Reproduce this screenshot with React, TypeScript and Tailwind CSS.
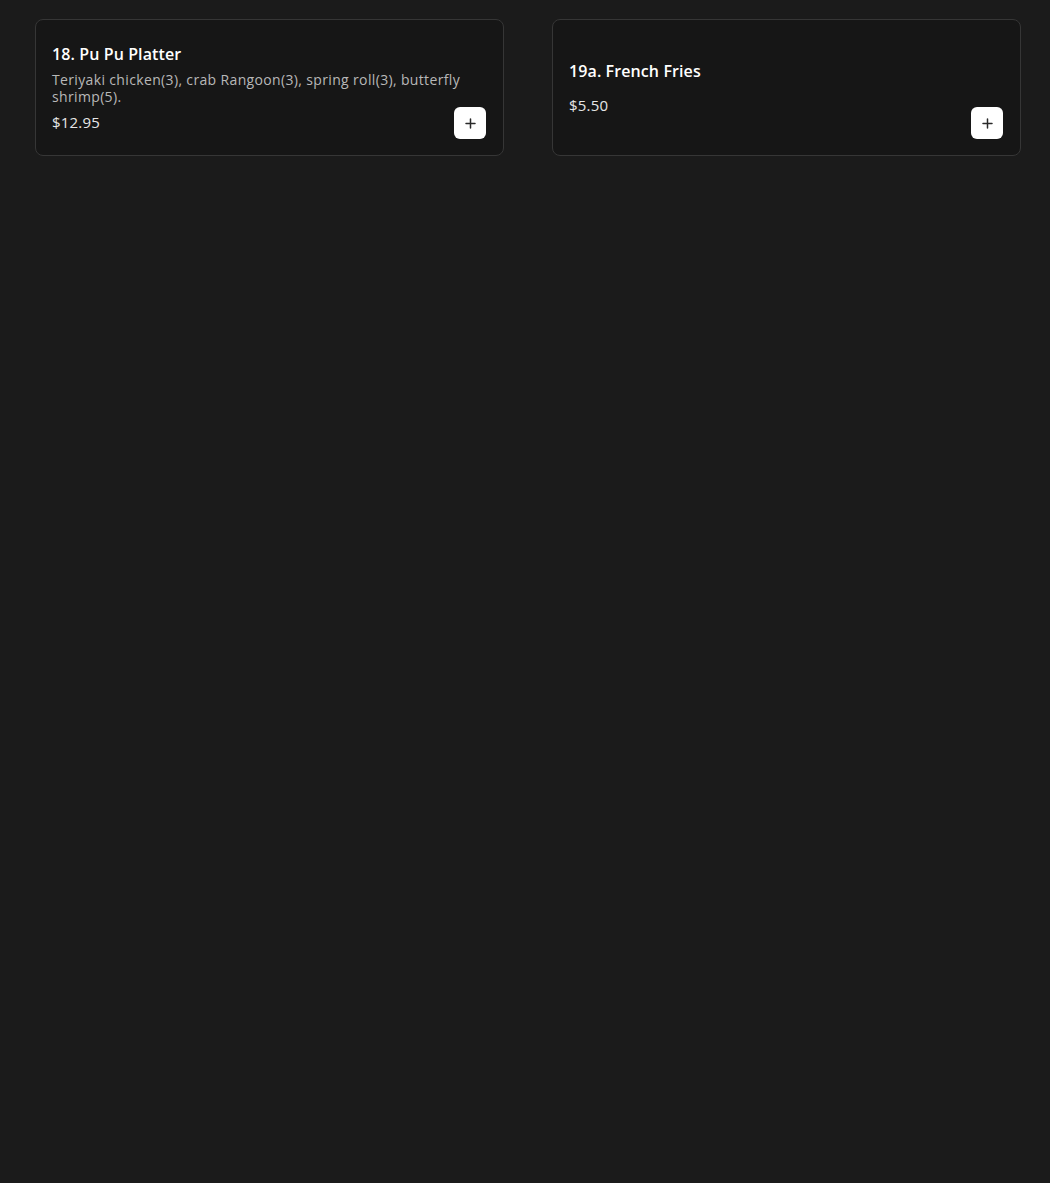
import React from "react";

type Item = { title: string; desc?: string; price: string };

const items: Item[] = [
  {
    title: "18. Pu Pu Platter",
    desc: "Teriyaki chicken(3), crab Rangoon(3), spring roll(3), butterfly shrimp(5).",
    price: "$12.95",
  },
  { title: "19a. French Fries", price: "$5.50" },
];

function Plus() {
  return (
    <svg width="11" height="11" viewBox="0 0 11 11" fill="none">
      <path d="M5.5 1v9M1 5.5h9" stroke="#2a2a2a" strokeWidth="1.5" strokeLinecap="round" />
    </svg>
  );
}

function Card({ item }: { item: Item }) {
  return (
    <div className="relative flex min-h-[137px] flex-col justify-center rounded-lg border border-[#363636] bg-[#161616] px-4 py-4">
      <div className="text-[16px] font-semibold leading-6 tracking-[0.1px] text-white">{item.title}</div>
      {item.desc ? (
        <div className="mt-[5px] text-[14px] leading-[17px] tracking-[0.35px] text-[#b8b8b8]">{item.desc}</div>
      ) : null}
      <div className={`${item.desc ? "mt-[5px]" : "mt-[10px]"} text-[15px] leading-6 tracking-[0.2px] text-[#e6e6e6]`}>
        {item.price}
      </div>
      <button className="absolute bottom-4 right-[17px] flex h-8 w-8 items-center justify-center rounded-md bg-white">
        <Plus />
      </button>
    </div>
  );
}

export default function App() {
  return (
    <div
      className="min-h-[1183px] w-full bg-[#1b1b1b] pl-[35px] pt-[19px]"
      style={{ fontFamily: "'Open Sans', 'Noto Sans', sans-serif" }}
    >
      <div className="grid grid-cols-[469px_469px] gap-x-[48px]">
        {items.map((it) => (
          <Card key={it.title} item={it} />
        ))}
      </div>
    </div>
  );
}
